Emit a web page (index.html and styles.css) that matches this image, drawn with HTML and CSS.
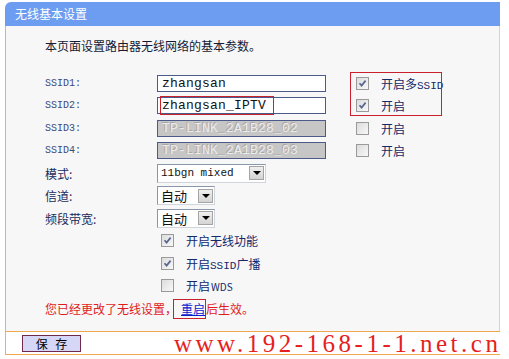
FILE: index.html
```html
<!DOCTYPE html>
<html lang="zh-CN">
<head>
    <meta charset="UTF-8">
    <title>无线基本设置</title>
    <link rel="stylesheet" href="styles.css">
</head>
<body>
    <div class="page">
        <div class="panel">
            <div class="hd">无线基本设置</div>

            <div class="bd">
                <p class="intro">本页面设置路由器无线网络的基本参数。</p>

                <div class="form">
                    <!-- SSID rows -->
                    <span class="lbl mono">SSID1:</span>
                    <input class="txt" type="text" value="zhangsan">
                    <label class="chk"><span class="cb on"></span><span>开启多<span class="mono">SSID</span></span></label>

                    <span class="lbl mono">SSID2:</span>
                    <input class="txt" type="text" value="zhangsan_IPTV">
                    <label class="chk"><span class="cb on"></span><span>开启</span></label>

                    <span class="lbl mono">SSID3:</span>
                    <input class="txt" type="text" value="TP-LINK_2A1B28_02" disabled>
                    <label class="chk"><span class="cb"></span><span>开启</span></label>

                    <span class="lbl mono">SSID4:</span>
                    <input class="txt" type="text" value="TP-LINK_2A1B28_03" disabled>
                    <label class="chk"><span class="cb"></span><span>开启</span></label>

                    <!-- selects -->
                    <span class="lbl">模式:</span>
                    <div class="sel wide"><span class="val mono">11bgn mixed</span><span class="arrow"></span></div>
                    <span></span>

                    <span class="lbl">信道:</span>
                    <div class="sel"><span class="val">自动</span><span class="arrow"></span></div>
                    <span></span>

                    <span class="lbl">频段带宽:</span>
                    <div class="sel"><span class="val">自动</span><span class="arrow"></span></div>
                    <span></span>

                    <!-- switches -->
                    <label class="chk sub"><span class="cb on"></span><span>开启无线功能</span></label>
                    <label class="chk sub"><span class="cb on"></span><span>开启<span class="mono">SSID</span>广播</span></label>
                    <label class="chk sub"><span class="cb"></span><span>开启<span class="small">WDS</span></span></label>

                    <p class="msg">您已经更改了无线设置，<a class="link">重启</a>后生效。</p>

                    <!-- annotation boxes -->
                    <span class="note note-ssid"></span>
                    <span class="note note-multi"></span>
                    <span class="note note-reboot"></span>
                </div>
            </div>

            <div class="ft">
                <button class="btn">保 存</button>
            </div>
        </div>

        <div class="mark">www.192-168-1-1.net.cn</div>
    </div>
</body>
</html>
```

FILE: styles.css
```css
/* Reset */
* {
    margin: 0;
    padding: 0;
    box-sizing: border-box;
}
body {
    font-family: "Noto Sans CJK SC", sans-serif;
    font-size: 12px;
    color: #1c2a5a;
    background: #fff;
}
.page {
    position: relative;
    width: 509px;
    height: 359px;
    padding: 2px 0 0 5px;
    overflow: hidden;
}
.panel {
    width: 495px;
}
.mono {
    font-family: "Liberation Mono", monospace;
}
/* Header bar */
.hd {
    height: 24px;
    line-height: 24px;
    padding-left: 10px;
    color: #fff;
    background: #6d9df0;
    border-radius: 6px 0 0 0;
}
/* Body */
.bd {
    background: #f7f7f7;
    border-left: 1px solid #f0b060;
    border-right: 1px solid #e4cfba;
    padding: 9px 0 11px 39px;
}
.intro {
    line-height: 22px;
    margin-bottom: 15px;
    color: #141a36;
}
.form {
    position: relative;
    display: grid;
    grid-template-columns: 112px 193px 1fr;
    grid-auto-rows: 22.5px;
    align-items: center;
}
.lbl.mono {
    font-size: 10px;
    color: #3c4a78;
}
/* Text inputs */
.txt {
    display: block;
    width: 169px;
    height: 17px;
    padding: 0 0 0 4px;
    border: 1px solid #4c5a8a;
    background: #fff;
    color: #111;
    font-family: "Liberation Mono", monospace;
    font-size: 13px;
    letter-spacing: 0.2px;
    outline: none;
}
.txt:disabled {
    background: #c6c6c6;
    color: #ececec;
    text-shadow: -1px -1px 0 #a6a6a6;
}
/* Select boxes */
.sel {
    display: flex;
    align-items: center;
    justify-content: space-between;
    width: 58px;
    height: 19px;
    padding: 0 1px 0 3px;
    border: 1px solid #8a96aa;
    border-right-color: #d0d4dc;
    border-bottom-color: #d0d4dc;
    background: #fff;
    color: #111;
    font-size: 13px;
}
.sel.wide {
    width: 109px;
}
.sel .val.mono {
    font-size: 11px;
}
.arrow {
    position: relative;
    width: 15px;
    height: 14px;
    border: 1px solid #a4a4a4;
    background: linear-gradient(#f0f0f0, #d4d4d4);
}
.arrow::after {
    content: "";
    position: absolute;
    left: 3px;
    top: 4px;
    border-left: 4px solid transparent;
    border-right: 4px solid transparent;
    border-top: 4px solid #000;
}
/* Checkboxes */
.chk {
    display: flex;
    align-items: center;
    gap: 12px;
    padding-left: 6px;
    color: #14286a;
}
.chk .mono {
    font-size: 11px;
}
.chk.sub {
    grid-column: 2 / 4;
    padding-left: 4px;
}
.small {
    font-size: 10px;
    margin-left: 1px;
}
.cb {
    flex: none;
    width: 13px;
    height: 13px;
    border: 1px solid #9a9a9a;
    background: linear-gradient(135deg, #dcdcdc, #f8f8f8);
}
.cb.on {
    background: url("data:image/svg+xml,%3Csvg xmlns='http://www.w3.org/2000/svg' width='11' height='11'%3E%3Cpath d='M2.5 5.2 L4.6 7.6 L8.6 2.6' fill='none' stroke='%235a6890' stroke-width='1.7'/%3E%3C/svg%3E") no-repeat center, linear-gradient(135deg, #dcdcdc, #f8f8f8);
}
/* Notice */
.msg {
    grid-column: 1 / 4;
    color: #e01c1c;
}
.link {
    color: #0a1ccc;
    text-decoration: underline;
    margin: 0 1px 0 4px;
}
/* Red annotation boxes */
.note {
    position: absolute;
    border: 1px solid #c8202c;
    pointer-events: none;
}
.note-ssid {
    left: 115px;
    top: 24px;
    width: 114px;
    height: 19px;
}
.note-multi {
    left: 305px;
    top: 0;
    width: 92px;
    height: 44px;
}
.note-reboot {
    left: 128px;
    top: 227px;
    width: 33px;
    height: 20px;
}
/* Footer */
.ft {
    height: 24px;
    padding: 3px 0 0 16px;
    background: #fff;
    border-top: 1px solid #f0a850;
    border-bottom: 1px solid #f0a850;
    border-left: 1px solid #f0b060;
}
.btn {
    width: 59px;
    height: 17px;
    background: #d6d6f6;
    border: 1px solid #6e2a4c;
    font-family: "Noto Sans CJK SC", sans-serif;
    font-size: 12px;
    line-height: 14px;
    word-spacing: 5px;
    color: #000;
}
/* Watermark */
.mark {
    position: absolute;
    left: 174px;
    top: 331px;
    font-family: "Liberation Serif", serif;
    font-size: 25px;
    line-height: 25px;
    letter-spacing: 3.5px;
    color: #e61e1e;
    white-space: nowrap;
}
```
